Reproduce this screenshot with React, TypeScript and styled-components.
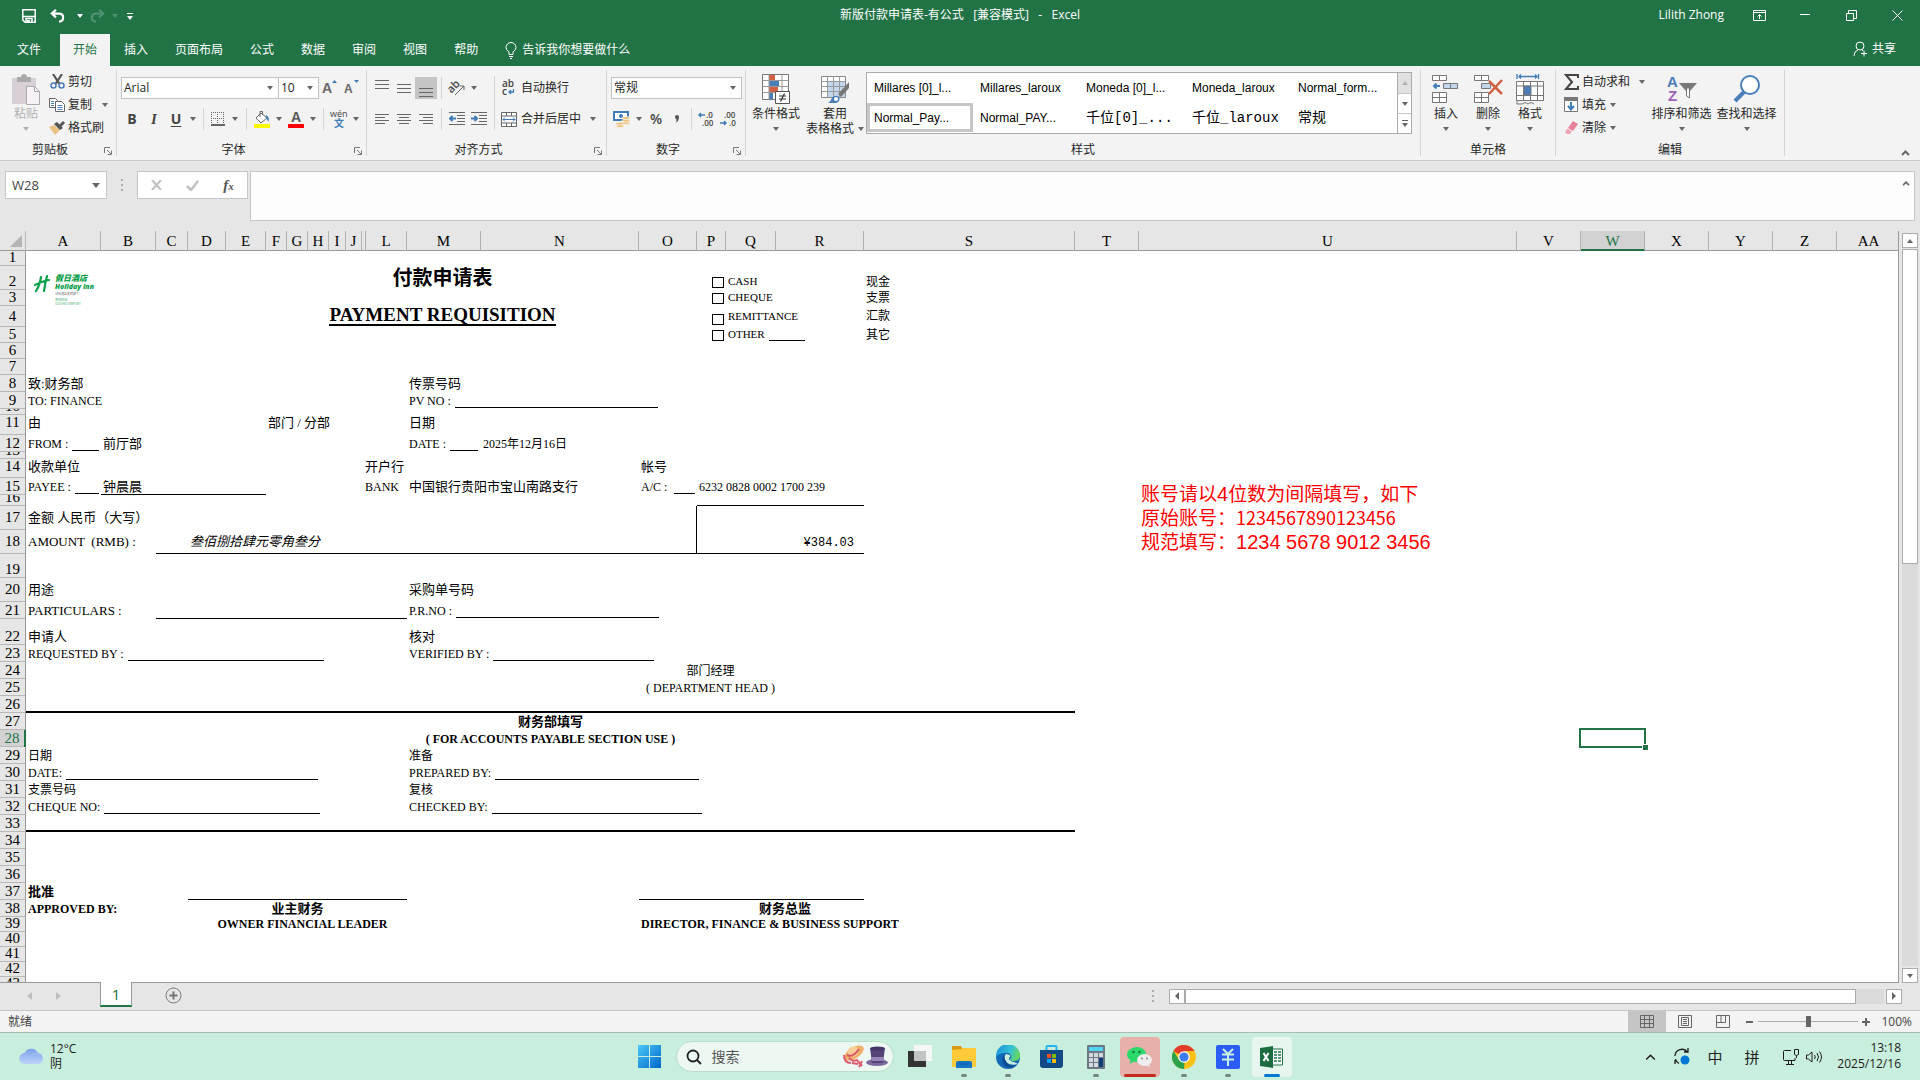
import React from "react";
import styled, { createGlobalStyle, css } from "styled-components";

const UI = `"Open Sans", "Noto Sans CJK SC", sans-serif`;
const SERIF = `"Liberation Serif", "Noto Sans CJK SC", serif`;
const GREEN = "#217346";

const Global = createGlobalStyle`
  *, *::before, *::after { box-sizing: border-box; }
  body { margin: 0; font: 12px/16px ${UI}; color: #262626; background: #e6e6e6; }
  button, input, select, textarea { font: inherit; color: inherit; margin: 0; }
  button { padding: 0; border: 0; background: none; }
  svg { display: block; flex: none; }
`;

const Page = styled.div`
  display: flex; flex-direction: column; height: 100vh; overflow: hidden;
`;

/* ---------- title bar and tabs ---------- */
const TitleBar = styled.header`
  display: grid; grid-template-columns: 1fr auto 1fr; align-items: center;
  flex: none; height: 34px; padding-bottom: 4px; background: ${GREEN}; color: #fff;
`;
const QuickBar = styled.div`
  display: flex; align-items: center; padding-left: 20px; padding-top: 2px;
`;
const DocName = styled.h1`
  margin: 0; font: inherit; white-space: pre;
`;
const WindowBar = styled.div`
  display: flex; justify-content: flex-end; align-items: center;
`;
const UserName = styled.span`margin-right: 12px;`;
const BarButton = styled.button<{ $w: number }>`
  display: flex; justify-content: center; align-items: center; width: ${p => p.$w}px; height: 28px; color: #fff;
`;
const Tabs = styled.nav`
  display: flex; gap: 1px; flex: none; height: 32px; background: ${GREEN}; color: #fff; padding-left: 3px;
`;
const Tab = styled.button<{ $on?: boolean }>`
  padding: 0 13px 1px; background: ${p => (p.$on ? "#f3f3f3" : "none")}; color: ${p => (p.$on ? GREEN : "#fff")};
  white-space: nowrap;
  &:first-child { padding-right: 18px; padding-left: 14px; }
`;
const Tell = styled.button`
  display: flex; align-items: center; gap: 5px; margin-left: 13px; color: #fff;
`;
const Share = styled(Tell)`margin-left: auto; margin-right: 24px; padding-bottom: 3px; gap: 4px;`;

/* ---------- ribbon ---------- */
const Ribbon = styled.section`
  display: flex; flex: none; height: 95px; background: #f3f3f3; border-bottom: 1px solid #c8c8c8;
`;
const GroupBox = styled.div<{ $w: number }>`
  display: flex; flex-direction: column; flex: none; width: ${p => p.$w}px; margin: 4px 0;
  border-right: 1px solid #d4d4d4;
`;
const GroupBody = styled.div<{ $pad: number }>`
  display: flex; height: 72px; padding-left: ${p => p.$pad}px;
`;
const GroupFoot = styled.div`
  display: flex; align-items: center; text-align: center; height: 14px; line-height: 14px;
`;
const GroupName = styled.span`flex: 1; padding-top: 1px;`;
const LaunchBtn = styled.button`
  display: flex; justify-content: center; width: 16px; padding-top: 4px;
`;
const Stack = styled.div`display: flex; flex-direction: column;`;
const Rows = styled.div`
  display: flex; flex-direction: column; gap: 9px; padding-top: 7px;
`;
const Row = styled.div`display: flex; align-items: center; height: 22px;`;
const ToolBtn = styled.button<{ $w?: number; $on?: boolean }>`
  display: flex; justify-content: center; align-items: center; flex: none;
  width: ${p => p.$w ?? 22}px; height: 22px; background: ${p => (p.$on ? "#c5c5c5" : "none")}; color: #444;
`;
const Letter = styled.span<{ $kind: "b" | "i" | "u" | "p" }>`
  font-size: 14px;
  ${p => p.$kind === "b" && css`font-weight: 700;`}
  ${p => p.$kind === "p" && css`font-weight: 600;`}
  ${p => p.$kind === "i" && css`font-family: "Liberation Serif", serif; font-style: italic; font-weight: 700; font-size: 15px;`}
  ${p => p.$kind === "u" && css`font-weight: 700; text-decoration: underline; text-underline-offset: 2px;`}
`;
const VSep = styled.span<{ $h?: number }>`
  flex: none; width: 1px; height: ${p => p.$h ?? 22}px; margin: 0 4px; background: #d4d4d4;
`;
const LongSep = styled(VSep)`margin-top: 6px;`;
const LineBtn = styled.button<{ $pad?: number }>`
  display: flex; align-items: center; gap: 2px; height: ${p => p.$pad ?? 23}px; white-space: nowrap;
`;
const IconBox = styled.span<{ $w?: number }>`
  display: flex; justify-content: center; flex: none; width: ${p => p.$w ?? 18}px;
`;
const CaretGap = styled.span<{ $l: number }>`margin-left: ${p => p.$l}px;`;
const BigBtn = styled.button<{ $w: number; $dim?: boolean }>`
  display: flex; flex-direction: column; align-items: center; flex: none; width: ${p => p.$w}px; height: 72px;
  padding-top: 3px; white-space: nowrap; color: ${p => (p.$dim ? "#b1b1b1" : "inherit")};
  line-height: 14px;
`;
const BigIcon = styled.span`display: flex; align-items: center; height: 32px; margin-bottom: 1px;`;
const BigLine = styled.span`display: flex; align-items: center; gap: 4px; min-height: 15px;`;
const Picker = styled.div<{ $w: number }>`
  display: grid; align-items: center; width: ${p => p.$w}px; height: 22px; border: 1px solid #c0c0c0; background: #fff;
  & + & { border-left: 0; }
  > * { grid-area: 1 / 1; }
  > svg { justify-self: end; margin-right: 5px; pointer-events: none; }
`;
const PickerSelect = styled.select`
  appearance: none; width: 100%; height: 20px; line-height: 20px; padding: 0 2px; border: 0; background: none; outline: 0;
`;
const Gallery = styled.div`
  display: grid; grid-template-columns: repeat(5, 106px) 14px; grid-template-rows: 30px 30px;
  margin: 2px 0 0 2px; border: 1px solid #ababab; background: #fff; height: 62px;
`;
const StyleItem = styled.button<{ $on?: boolean; $song?: boolean }>`
  height: 29px; padding-left: ${p => (p.$on ? 4 : 7)}px; text-align: left; white-space: nowrap; overflow: hidden;
  border: ${p => (p.$on ? "3px solid #c6c6c6" : "0")}; color: #000;
  font: ${p => (p.$song ? `14px/20px "Liberation Mono", "Noto Sans CJK SC", monospace` : `12px/20px "Liberation Sans", "Noto Sans CJK SC", sans-serif`)};
`;
const GalleryBar = styled.div`
  grid-area: 1 / 6 / 3 / 7; display: grid; grid-template-rows: 1fr 1fr 1fr; border-left: 1px solid #ababab;
`;
const GalleryBtn = styled.button<{ $off?: boolean }>`
  display: flex; justify-content: center; align-items: center; background: ${p => (p.$off ? "#e1e1e1" : "#fff")};
  & + & { border-top: 1px solid #c6c6c6; }
`;
const Collapse = styled.button`
  align-self: flex-end; margin: 0 10px 4px auto; display: flex;
`;

/* ---------- formula bar ---------- */
const FormulaRow = styled.section`
  display: flex; flex: none; align-items: flex-start; padding: 10px 5px 10px; height: 70px;
`;
const NameBox = styled.div`
  display: flex; align-items: center; width: 102px; height: 28px; padding-right: 6px; border: 1px solid #c6c6c6; background: #fff;
`;
const NameInput = styled.input`
  flex: 1; min-width: 0; border: 0; padding: 0 6px; background: none; outline: 0; font-size: 13px; color: #444;
`;
const Dots = styled.span`width: 30px; display: flex; justify-content: center; padding-top: 8px;`;
const FxBox = styled.div`
  display: flex; align-items: center; width: 111px; height: 28px; border: 1px solid #c6c6c6; background: #fff;
`;
const Fx = styled.span`
  font: italic 700 15px "Liberation Serif", serif; color: #555;
  small { font-size: 11px; }
`;
const FormulaBox = styled.div`
  display: flex; align-items: flex-start; flex: 1; height: 50px; margin-left: 2px; border: 1px solid #c6c6c6; background: #fdfdfd;
`;
const FormulaInput = styled.textarea`
  flex: 1; height: 48px; border: 0; background: none; resize: none; outline: 0;
`;
const FormulaToggle = styled.button`margin: 9px 4px;`;

/* ---------- sheet ---------- */
const SheetArea = styled.main`display: flex; flex: 1; min-height: 0;`;
const SheetView = styled.div`
  flex: 1; min-width: 0; overflow: hidden; border-right: 1px solid #999; border-bottom: 1px solid #999; background: #fff;
`;
const Table = styled.table`
  table-layout: fixed; width: 1901px; border-collapse: separate; border-spacing: 0; font: 12px/14px ${SERIF}; color: #000;
  td, th { padding: 0; font-weight: inherit; vertical-align: top; }
`;
const Corner = styled.th`background: #e6e6e6; border-right: 1px solid #b8b8b8; border-bottom: 1px solid #999;`;
const CornerMark = styled.svg`margin: 4px 3px 0 auto;`;
const ColHead = styled.th<{ $on?: boolean }>`
  height: 20px; background: ${p => (p.$on ? "#d2d2d2" : "#e6e6e6")}; color: ${p => (p.$on ? GREEN : "#000")};
  border-right: 1px solid #b1b1b1; border-bottom: ${p => (p.$on ? `2px solid ${GREEN}` : "1px solid #999")};
  overflow: hidden;
`;
const ColName = styled.div`height: 18px; padding-top: 1px; font-size: 15px; line-height: 18px;`;
const RowHead = styled.th<{ $on?: boolean }>`
  background: ${p => (p.$on ? "#d2d2d2" : "#e6e6e6")}; color: ${p => (p.$on ? GREEN : "#000")};
  border-right: ${p => (p.$on ? `2px solid ${GREEN}` : "1px solid #999")};
`;
type Level = "top" | "mid" | "low";
const level = (v?: Level) => (v === "mid" ? "center" : v === "top" ? "flex-start" : "flex-end");
const RowLabel = styled.div<{ $h: number; $v?: Level }>`
  display: flex; justify-content: center; align-items: ${p => level(p.$v)};
  height: ${p => p.$h}px; border-bottom: 1px solid #b8b8b8; overflow: hidden; font-size: 15px; line-height: 15px;
`;
type Align = "left" | "center" | "right";
const CellBox = styled.div<{
  $h: number; $v?: Level; $align?: Align; $bottom?: number; $right?: boolean; $size?: number; $bold?: boolean; $indent?: number;
}>`
  display: flex; gap: 4px; height: ${p => p.$h}px; padding: 0 2px;
  padding-left: ${p => 2 + (p.$indent ?? 0)}px; padding-bottom: ${p => ((p.$size ?? 12) !== 12 && !p.$bottom ? 1 : 0)}px;
  align-items: ${p => level(p.$v)};
  justify-content: ${p => (p.$align === "center" ? "center" : p.$align === "right" ? "flex-end" : "flex-start")};
  border-bottom: ${p => (p.$bottom ? `${p.$bottom}px solid #000` : "0")};
  border-right: ${p => (p.$right ? "1px solid #000" : "0")};
  font-size: ${p => p.$size ?? 12}px; font-weight: ${p => (p.$bold ? 700 : 400)};
  line-height: ${p => ((p.$size ?? 12) > 15 ? 22 : 15)}px; white-space: pre;
`;
const Blank = styled.span<{ $w: number }>`
  flex: none; width: ${p => p.$w}px; height: 1px; margin-bottom: 1px; background: #000; align-self: flex-end;
`;
const Heading = styled.span`border-bottom: 2px solid #000; line-height: 18px;`;
const Slant = styled.em`font-style: italic;`;
const Money = styled.span`font: 12px/15px "Liberation Mono", monospace; padding-top: 4px; margin-right: 8px;`;
const Tick = styled.input`
  appearance: none; flex: none; width: 12px; height: 11px; margin: 0 0 2px; border: 1px solid #000; background: #fff;
`;
const Note = styled.p`
  margin: 0; padding: 3px 0 0 2px; color: #f00; white-space: nowrap;
  font: 19px/24px "Noto Sans CJK SC", sans-serif;
`;
const NoteDigits = styled.span<{ $wide?: boolean }>`
  font: ${p => (p.$wide ? `20px/20px "Liberation Sans", sans-serif` : `18px/20px "Noto Sans CJK SC", sans-serif`)};
`;
const Active = styled.div`
  position: relative; height: 17px;
  &::before { content: ""; position: absolute; inset: -2px -1px -1px -2px; border: 2px solid ${GREEN}; }
  &::after {
    content: ""; position: absolute; right: -3px; bottom: -3px; width: 6px; height: 6px;
    background: ${GREEN}; border: 1px solid #fff; border-width: 1px 0 0 1px;
  }
`;
const VScroll = styled.div`
  display: flex; flex-direction: column; flex: none; width: 21px; padding: 2px 2px 0 3px;
`;
const ScrollBtn = styled.button`
  display: flex; justify-content: center; align-items: center; flex: none; width: 16px; height: 15px;
  border: 1px solid #ababab; background: #fff;
`;
const VTrack = styled.div`flex: 1; background: #dbdbdb; margin: 1px 0 2px;`;
const VThumb = styled.div`height: 44%; border: 1px solid #ababab; background: #fff;`;

/* ---------- sheet tabs and status bar ---------- */
const TabStrip = styled.div`
  display: flex; flex: none; height: 28px; border-bottom: 1px solid #c6c6c6; padding-right: 18px;
`;
const Arrows = styled.div`display: flex; align-items: center; gap: 24px; width: 100px; padding: 0 0 2px 27px;`;
const SheetTab = styled.button`
  width: 32px; height: 25px; margin-top: -1px; background: #fff; border: 1px solid #999; border-width: 0 1px 2px;
  border-bottom-color: ${GREEN}; color: ${GREEN}; font-size: 15px; line-height: 20px;
`;
const AddSheet = styled.button`margin: 4px 0 0 33px; align-self: flex-start;`;
const HScroll = styled.div`display: flex; align-items: center; gap: 15px; width: 750px; margin-left: auto; padding-bottom: 1px;`;
const HBar = styled.div`display: flex; flex: 1;`;
const HTrack = styled.div`flex: 1; background: #dbdbdb; margin-right: 2px;`;
const HThumb = styled.div`width: 96%; height: 15px; border: 1px solid #ababab; background: #fff;`;
const StatusBar = styled.footer`
  display: flex; flex: none; align-items: center; height: 22px; padding: 0 8px; background: #f3f3f3; border-bottom: 1px solid #a5bdb2; color: #444;
`;
const ViewBtns = styled.div`display: flex; margin-left: auto;`;
const ViewBtn = styled.button<{ $on?: boolean }>`
  display: flex; justify-content: center; align-items: center; width: 38px; height: 21px; background: ${p => (p.$on ? "#c5c5c5" : "none")};
`;
const Zoom = styled.div`display: flex; align-items: center; gap: 4px; margin-left: 4px;`;
const Sign = styled.button`width: 8px; color: #666;`;
const Slider = styled.input`
  appearance: none; width: 100px; height: 11px; background: linear-gradient(#ababab, #ababab) center / 100% 1px no-repeat; outline: 0;
  &::-webkit-slider-thumb { appearance: none; width: 5px; height: 11px; background: #666; border: 0; border-radius: 0; }
`;
const Percent = styled.span`width: 35px; text-align: right; margin-left: 7px;`;

/* ---------- task bar ---------- */
const TaskBar = styled.footer`
  display: grid; grid-template-columns: 1fr auto 1fr; align-items: center; flex: none; height: 47px; background: #c8eedd; color: #1c1c1c;
`;
const Weather = styled.button`
  display: flex; align-items: center; gap: 6px; padding-left: 19px; padding-bottom: 2px; justify-self: start; text-align: left;
`;
const WeatherText = styled.span`display: flex; flex-direction: column; line-height: 15px;`;
const Dock = styled.div`display: flex; align-items: center; padding-left: 1px;`;
const DockBtn = styled.button<{ $tone?: "alert" | "active"; $mark?: "dot" | "wide" | "long" }>`
  display: flex; justify-content: center; align-items: center; position: relative; width: 40px; height: 40px; margin: 0 2px; border-radius: 4px;
  background: ${p => (p.$tone === "alert" ? "#e8b0aa" : p.$tone === "active" ? "#e6f6ee" : "none")};
  &::after {
    content: ""; position: absolute; bottom: 0; border-radius: 2px; height: 3px;
    width: ${p => (p.$mark === "dot" ? 6 : p.$mark === "wide" ? 16 : p.$mark === "long" ? 32 : 0)}px;
    background: ${p => (p.$mark === "dot" ? "#728a7f" : p.$mark === "wide" ? "#0078d4" : "#c42b1c")};
  }
`;
const SearchBox = styled.label`
  display: flex; align-items: center; width: 218px; height: 31px; margin: 0 4px; padding: 0 4px 0 9px;
  border: 1px solid #b9dccb; border-radius: 16px; background: #eef8f3;
`;
const SearchInput = styled.input`
  flex: 1; min-width: 0; border: 0; background: none; padding: 0 10px; font-size: 14px; outline: 0;
  &::placeholder { color: #555; opacity: 1; }
`;
const Tray = styled.div`display: flex; justify-content: flex-end; align-items: center; padding-right: 19px;`;
const TrayBtn = styled.button<{ $w: number }>`
  display: flex; justify-content: center; align-items: center; width: ${p => p.$w}px; height: 30px; font-size: 15px;
`;
const Clock = styled.time`display: flex; flex-direction: column; text-align: right; width: 81px; line-height: 16px; padding-bottom: 2px;`;

/* ---------- small drawings ---------- */
const Caret = ({ c = "#666", up = false }: { c?: string; up?: boolean }) => (
  <svg width="6" height="4" viewBox="0 0 6 4"><path d={up ? "M0 4h6L3 0z" : "M0 0h6L3 4z"} fill={c} /></svg>
);
const Chevron = ({ c = "#666", w = 2, s = 9 }: { c?: string; w?: number; s?: number }) => (
  <svg width={s} height={s - 3} viewBox="0 0 9 6" fill="none" stroke={c} strokeWidth={w}><path d="M1 5l3.500-3.500L8 5" /></svg>
);
const Lines = ({ w, top }: { w: number[][]; top: number }) => (
  <svg width="16" height="18" viewBox="0 0 16 18" stroke="#666" strokeWidth="1">
    {w.map(([a, b], i) => <path key={i} d={`M${a} ${top + i * (w.length > 3 ? 3 : 4) + 0.5}H${b}`} />)}
  </svg>
);
const full = [[1, 15], [1, 15], [1, 15]];
const Indent = ({ right = false }: { right?: boolean }) => (
  <svg width="16" height="14" viewBox="0 0 16 14" fill="none" stroke="#666">
    <path d="M0 .5h16M8 3.500h8M8 6.500h8M8 9.500h8M0 12.500h16" />
    <path d={right ? "M0 6.500h6M3.500 4l2.500 2.500L3.500 9" : "M7 6.500H1M3.500 4L1 6.500 3.500 9"} stroke="#3f7cb8" strokeWidth="2" />
  </svg>
);
const Launcher = () => (
  <svg width="8" height="8" viewBox="0 0 8 8" fill="none" stroke="#777"><path d="M.5 6V.5H6M3 3l4 4M7.500 3.500v4h-4" /></svg>
);
const Save = () => (
  <svg width="14" height="14" viewBox="0 0 14 14" fill="none" stroke="#fff" strokeWidth="1.500"><path d="M.8.8h12.400v12.400H3L.8 11z" /><path d="M.8 7.500h12.400" /><path d="M4 13v-3.500h6V13" /><path d="M5 11h3v3H5z" fill="#fff" stroke="none" /></svg>
);
const Undo = ({ flip = false, c = "#fff" }: { flip?: boolean; c?: string }) => (
  <svg width="15" height="14" viewBox="0 0 15 14" fill="none" stroke={c} strokeWidth="2.200">
    <g transform={flip ? "matrix(-1 0 0 1 15 0)" : undefined}><path d="M6 .8L1.800 4.600 6 8.400M2 4.600h7c5.500 0 5.500 7.500 0 8" /></g>
  </svg>
);
const PasteIcon = () => (
  <svg width="28" height="31" viewBox="0 0 28 31"><path d="M0 4h24v26H0z" fill="#d8d0d6" /><path d="M5 3h4a3 3 0 016 0h4v5H5z" fill="#aaa" /><path d="M14.500 12.500h8l5 5v13h-13z" fill="#f7f2f8" stroke="#aaa" /><path d="M22.500 12.500v5h5" fill="none" stroke="#aaa" /></svg>
);
const Cut = () => (
  <svg width="15" height="15" viewBox="0 0 15 15" fill="none"><path d="M3 0l6.500 10M12 0L5.500 10" stroke="#555" strokeWidth="2.200" /><circle cx="3.500" cy="11.500" r="2.500" stroke="#4a7ebb" strokeWidth="1.500" /><circle cx="11.500" cy="11.500" r="2.500" stroke="#4a7ebb" strokeWidth="1.500" /></svg>
);
const Copy = () => (
  <svg width="16" height="14" viewBox="0 0 16 14" fill="#fff" stroke="#666"><path d="M.5.5h6l2 2v7h-8z" /><path d="M6.500 3.500h6l3 3v7h-9z" /><path d="M2 3.500h3M2 5.500h3M2 7.500h3M8.500 7.500h5M8.500 9.500h5M8.500 11.500h5" stroke="#4a7ebb" /></svg>
);
const Brush = () => (
  <svg width="16" height="14" viewBox="0 0 16 14"><path d="M0 6l5-2 6 5-5 5z" fill="#eac282" /><path d="M5 3l3-2 6 6-3 2z" fill="#555" /><path d="M10 4l4-4 2 2-4 4z" fill="#555" /></svg>
);
const GrowA = ({ down = false }: { down?: boolean }) => (
  <svg width="16" height="18" viewBox="0 0 16 18"><text x="0" y={down ? 14 : 14} fontFamily="Liberation Sans" fontWeight="700" fontSize={down ? 12 : 14} fill="#666">A</text><path d={down ? "M10 1h5l-2.500 3z" : "M10 4h5l-2.500-3z"} fill="#3f7cb8" /></svg>
);
const Borders = () => (
  <svg width="14" height="14" viewBox="0 0 14 14" fill="none" stroke="#666"><path d="M0 .5h13M0 6.500h13M.5 0v13M6.500 0v13M12.500 0v13" strokeDasharray="1 1" /><path d="M0 13h14" strokeWidth="2" /></svg>
);
const Fill = () => (
  <svg width="16" height="18" viewBox="0 0 16 18"><path d="M7 3l6 5-6 5-5-5z" fill="#fff" stroke="#666" /><path d="M6 7V1.500h2.500V5" fill="none" stroke="#666" /><path d="M12 5q4 2 2.500 7Q13 9 12 8z" fill="#3f7cb8" /><path d="M0 14h16v4H0z" fill="#ff0" /></svg>
);
const FontColor = () => (
  <svg width="16" height="18" viewBox="0 0 16 18"><text x="3" y="12" fontFamily="Liberation Sans" fontWeight="700" fontSize="14" fill="#555">A</text><path d="M0 14h16v4H0z" fill="#f00" /></svg>
);
const Wen = () => (
  <svg width="18" height="20" viewBox="0 0 18 20"><text x="0" y="8" fontFamily="Open Sans" fontSize="9" fill="#444">wén</text><text x="4" y="18" fontFamily="Noto Sans CJK SC" fontWeight="700" fontSize="10" fill="#3f7cb8">文</text></svg>
);
const Orient = () => (
  <svg width="18" height="18" viewBox="0 0 18 18"><text transform="rotate(-45 6 12)" x="2" y="12" fontFamily="Open Sans" fontSize="11" fontWeight="600" fill="#444">ab</text><path d="M7 16l9-9M16 11V7h-4" fill="none" stroke="#666" /></svg>
);
const Wrap = () => (
  <svg width="14" height="18" viewBox="0 0 14 18"><text x="0" y="8" fontFamily="Open Sans" fontWeight="600" fontSize="10" fill="#444">ab</text><text x="0" y="16" fontFamily="Open Sans" fontWeight="600" fontSize="10" fill="#444">c</text><path d="M11.500 10v3H7M9 11l-2 2 2 2" fill="none" stroke="#3f7cb8" strokeWidth="1.300" /></svg>
);
const Merge = () => (
  <svg width="16" height="15" viewBox="0 0 16 15" fill="#fff" stroke="#666"><path d="M.5.500h15v14H.5zM.5 4h15M.5 11h15M5.500.500V4M10.500.500V4M5.500 11v3.500M10.500 11v3.500" /><path d="M2 7.500h12M4 5.500l-2 2 2 2M12 5.500l2 2-2 2" fill="none" stroke="#3f7cb8" /></svg>
);
const Currency = () => (
  <svg width="18" height="18" viewBox="0 0 18 18"><path d="M1 2h14v8H1z" fill="#fff" stroke="#3f7cb8" strokeWidth="2" /><circle cx="8" cy="6" r="2" fill="#3f7cb8" /><g fill="#eac282" stroke="#fff" strokeWidth=".6"><ellipse cx="13" cy="13" rx="4" ry="1.500" /><ellipse cx="13" cy="10.500" rx="4" ry="1.500" /><ellipse cx="13" cy="8" rx="4" ry="1.500" /><ellipse cx="7" cy="16" rx="4" ry="1.500" /><ellipse cx="7" cy="13.500" rx="4" ry="1.500" /></g></svg>
);
const Decimal = ({ less = false }: { less?: boolean }) => (
  <svg width="18" height="16" viewBox="0 0 18 16" fontFamily="Open Sans" fontSize="8" fontWeight="600" fill="#444"><text x={less ? 4 : 8} y="7">{less ? ".00" : ".0"}</text><text x={less ? 9 : 4} y="15">{less ? ".0" : ".00"}</text><path d={less ? "M0 12h6M4 10l2 2-2 2" : "M7 4H1M3 2L1 4l2 2"} fill="none" stroke="#3f7cb8" strokeWidth="1.500" /></svg>
);
const CondIcon = () => (
  <svg width="28" height="30" viewBox="0 0 28 30"><path d="M.5.500h26v25H.5z" fill="#fff" stroke="#777" /><path d="M7 1h6v5H7zM7 13h9v5H7z" fill="#d35f43" /><path d="M7 7h10v5H7zM7 19h4v6H7z" fill="#4a7ebb" /><path d="M.5 6.500h26M.5 12.500h26M.5 18.500h26M7 .5v25M20 .5v25" stroke="#999" fill="none" /><path d="M13.500 17.500h14v12h-14z" fill="#fff" stroke="#555" /><path d="M17 22h7M17 25h7M22.500 19.500l-4 8" stroke="#333" strokeWidth="1.200" /></svg>
);
const TableIcon = () => (
  <svg width="29" height="30" viewBox="0 0 29 30"><path d="M.5 2.500h24v21H.5z" fill="#fff" stroke="#888" /><path d="M7 8h17v15H7z" fill="#c3d6ec" /><path d="M.5 7.500h24M.5 12.500h24M.5 17.500h24M6.500 2.500v21M12.500 2.500v21M18.500 2.500v21" stroke="#999" fill="none" /><path d="M28 8v6l-8 9-3-3z" fill="#777" /><path d="M7 29q3-2 4-5 3-4 7-1 2 4-3 6z" fill="#4a7ebb" /><circle cx="15" cy="25" r="2" fill="#fff" /></svg>
);
const CellIcon = ({ del = false }: { del?: boolean }) => (
  <svg width="29" height="28" viewBox="0 0 29 28" fill="#fff" stroke="#777"><path d="M.5.500h14v5H.5zM7.500.500v5M.5 17.500h14v10H.5zM7.500 17.500v10M.5 22.500h14" /><path d={del ? "M7.500 8.500h9v5h-9z" : "M11.500 8.500h14v5h-14zM18.500 8.500v5"} fill="#c3d6ec" />{del ? <path d="M15 6l13 13M28 5L15 19" stroke="#d35f43" strokeWidth="2.500" /> : <path d="M8 11H2M4.500 8.500L2 11l2.500 2.500" fill="none" stroke="#3f7cb8" strokeWidth="2" />}</svg>
);
const FormatIcon = () => (
  <svg width="28" height="31" viewBox="0 0 28 31" fill="none" stroke="#777"><path d="M1 0v5M22.500 0v5M3 2.500h18M5 .5l-2 2 2 2M19 .5l2 2-2 2" stroke="#3f7cb8" strokeWidth="1.300" /><path d="M.5 7.500h27v19H.5zM.5 12h27M.5 21.500h27M7.500 7.500v19M14.500 7.500v19M21.500 7.500v19" fill="#fff" /><path d="M8 12h7v9H8z" fill="#4a7ebb" /><path d="M1 27v3h5q3-3 6 0 3-3 6 0" /></svg>
);
const Sigma = () => (
  <svg width="15" height="16" viewBox="0 0 15 16" fill="none" stroke="#444" strokeWidth="2"><path d="M14 4V1H2l6 7-6 7h12v-3" /></svg>
);
const FillDown = () => (
  <svg width="14" height="15" viewBox="0 0 14 15"><path d="M.5.500h13v14H.5z" fill="#fff" stroke="#777" /><path d="M0 0h14v4H0z" fill="#777" /><path d="M7 5v7M4 9l3 3.500L10 9" fill="none" stroke="#3f7cb8" strokeWidth="2" /></svg>
);
const Eraser = () => (
  <svg width="13" height="13" viewBox="0 0 13 13"><path d="M8 0l5 3-5 7-5-3z" fill="#e8829a" /><path d="M2.500 7.500l4 3L5 13H2l-2-2z" fill="#f0a3b4" /></svg>
);
const SortIcon = () => (
  <svg width="30" height="30" viewBox="0 0 30 30"><text x="0" y="13" fontFamily="Liberation Sans" fontWeight="700" fontSize="15" fill="#4a7ebb">A</text><text x="1" y="27" fontFamily="Liberation Sans" fontWeight="700" fontSize="15" fill="#9b5fb5">Z</text><path d="M12 9h18l-7 8h-4z" fill="#777" /><path d="M19.500 14h3v10l-3-2z" fill="#fff" stroke="#777" /></svg>
);
const FindIcon = () => (
  <svg width="28" height="28" viewBox="0 0 28 28" fill="none" stroke="#4a7ebb"><circle cx="17" cy="10" r="9" fill="#fff" strokeWidth="2" /><path d="M11 17L2 26" strokeWidth="4" /></svg>
);
const Logo = () => (
  <svg width="64" height="44" viewBox="0 -9 64 44" role="img" aria-label="Holiday Inn">
    <g fill="none" stroke="#0ba14b" strokeWidth="2.200" strokeLinecap="round"><path d="M7 2Q6 10 2 16M13 1q-2 8-3 15M1 10q8-4 14-5" /></g>
    <g fill="#0ba14b"><text x="21" y="6" fontFamily="Noto Sans CJK SC" fontSize="8" fontWeight="900" fontStyle="italic">假日酒店</text><text x="21" y="14" fontFamily="Open Sans" fontSize="7" fontWeight="800" fontStyle="italic">Holiday Inn</text></g>
    <g fontFamily="Noto Sans CJK SC" fontSize="3"><text x="21" y="20" fill="#777">洲际酒店集团旗下</text><text x="21" y="26" fill="#3db36c">贵阳机场</text><text x="21" y="30" fill="#3db36c">GUIYANG AIRPORT</text></g>
  </svg>
);

/* ---------- sheet data ---------- */
const cols: [string, number][] = [
  ["A", 75], ["B", 55], ["C", 32], ["D", 38], ["E", 40], ["F", 21], ["G", 21], ["H", 21], ["I", 17], ["J", 16], ["", 4],
  ["L", 41], ["M", 74], ["N", 158], ["O", 58], ["P", 29], ["Q", 50], ["R", 88], ["S", 211], ["T", 64], ["U", 378],
  ["V", 64], ["W", 64], ["X", 64], ["Y", 64], ["Z", 64], ["AA", 64],
];
const heights = [
  15, 24, 16, 21, 16, 16, 16, 17, 17, 6, 20, 17, 7, 19, 17, 11, 24, 24, 24, 24, 17, 26,
  17, 17, 17, 17, 17, 17, 17, 17, 17, 17, 17, 17, 17, 17, 17, 17, 15, 15, 15, 15, 15,
];
const levels: Record<number, Level> = { 4: "mid", 11: "top", 14: "top", 17: "mid", 18: "mid", 20: "mid" };

type Cell = {
  from: number; to?: number; text?: React.ReactNode; align?: Align; bottom?: number; right?: boolean;
  size?: number; bold?: boolean; indent?: number; rows?: number; v?: Level;
};
/* column numbers: A=0 B=1 C=2 D=3 E=4 F=5 G=6 H=7 I=8 J=9 K=10 L=11 M=12 N=13 O=14 P=15 Q=16 R=17 S=18 T=19 U=20 V=21 W=22 */
const labelled = (label: string, width: number) => <>{label}<Blank $w={width} /></>;
const payWay = (id: string, label: string, zh: string, blank?: number): Cell[] => [
  { from: 15, align: "right", v: "low", text: <Tick type="checkbox" id={id} /> },
  { from: 16, to: 17, size: 11, text: <><label htmlFor={id}>{label}</label>{blank && <Blank $w={blank} />}</> },
  { from: 18, size: 12, text: zh },
];
const sheet: Record<number, Cell[]> = {
  2: [{ from: 0, v: "top", text: <Logo />, indent: 6 }, { from: 3, to: 14, align: "center", size: 20, bold: true, text: "付款申请表" }, ...payWay("cash", "CASH", "现金")],
  3: payWay("cheque", "CHEQUE", "支票"),
  4: [{ from: 3, to: 14, align: "center", size: 19, bold: true, text: <Heading>PAYMENT REQUISITION</Heading> }, ...payWay("remittance", "REMITTANCE", "汇款")],
  5: payWay("other", "OTHER", "其它", 36),
  8: [{ from: 0, size: 13, text: "致:财务部" }, { from: 12, size: 13, text: "传票号码" }],
  9: [{ from: 0, text: "TO: FINANCE" }, { from: 12, to: 14, text: labelled("PV NO :", 203) }],
  11: [{ from: 0, size: 13, text: "由" }, { from: 5, size: 13, text: "部门 / 分部" }, { from: 12, size: 13, text: "日期" }],
  12: [{ from: 0, text: labelled("FROM :", 27) }, { from: 1, size: 13, text: "前厅部" }, { from: 12, text: labelled("DATE :", 28) }, { from: 13, text: "2025年12月16日" }],
  14: [{ from: 0, size: 13, text: "收款单位" }, { from: 10, size: 13, indent: 1, text: "开户行" }, { from: 14, size: 13, text: "帐号" }],
  15: [
    { from: 0, text: labelled("PAYEE :", 24) }, { from: 1, to: 4, size: 13, bottom: 1, text: "钟晨晨" }, { from: 10, indent: 1, text: "BANK" },
    { from: 12, size: 13, text: "中国银行贵阳市宝山南路支行" }, { from: 14, text: labelled("A/C : ", 21) }, { from: 15, text: "6232 0828 0002 1700 239" },
    { from: 20, rows: 4, text: <Note>账号请以<NoteDigits $wide>4</NoteDigits>位数为间隔填写，如下<br />原始账号：<NoteDigits>1234567890123456</NoteDigits><br />规范填写：<NoteDigits $wide>1234 5678 9012 3456</NoteDigits></Note> },
  ],
  16: [{ from: 15, to: 17, bottom: 1 }],
  17: [{ from: 0, size: 13, text: "金额 人民币（大写）" }, { from: 14, right: true }],
  18: [
    { from: 0, size: 13, text: "AMOUNT  (RMB) :" }, { from: 2, bottom: 1 }, { from: 3, to: 13, size: 13, bottom: 1, text: <Slant>叁佰捌拾肆元零角叁分</Slant> },
    { from: 14, bottom: 1, right: true }, { from: 15, to: 17, bottom: 1, align: "right", text: <Money>¥384.03</Money> },
  ],
  20: [{ from: 0, size: 13, text: "用途" }, { from: 12, size: 13, text: "采购单号码" }],
  21: [{ from: 0, size: 13, text: "PARTICULARS :" }, { from: 2, to: 11, bottom: 1 }, { from: 12, to: 14, text: labelled("P.R.NO :", 203) }],
  22: [{ from: 0, size: 13, text: "申请人" }, { from: 12, size: 13, text: "核对" }],
  23: [{ from: 0, to: 8, text: labelled("REQUESTED BY :", 196) }, { from: 12, to: 14, text: labelled("VERIFIED BY :", 161) }],
  24: [{ from: 9, to: 18, align: "center", text: "部门经理" }],
  25: [{ from: 9, to: 18, align: "center", text: "( DEPARTMENT HEAD )" }],
  26: [{ from: 0, to: 18, bottom: 2 }],
  27: [{ from: 0, to: 18, align: "center", bold: true, size: 13, text: "财务部填写" }],
  28: [{ from: 0, to: 18, align: "center", bold: true, text: "( FOR ACCOUNTS PAYABLE SECTION USE )" }, { from: 22, text: <Active /> }],
  29: [{ from: 0, text: "日期" }, { from: 12, text: "准备" }],
  30: [{ from: 0, to: 8, text: labelled("DATE:", 252) }, { from: 12, to: 15, text: labelled("PREPARED BY:", 204) }],
  31: [{ from: 0, text: "支票号码" }, { from: 12, text: "复核" }],
  32: [{ from: 0, to: 8, text: labelled("CHEQUE NO:", 216) }, { from: 12, to: 15, text: labelled("CHECKED BY:", 210) }],
  33: [{ from: 0, to: 18, bottom: 2 }],
  37: [{ from: 0, bold: true, size: 13, text: "批准" }, { from: 3, to: 11, bottom: 1 }, { from: 14, to: 17, bottom: 1 }],
  38: [{ from: 0, bold: true, text: "APPROVED BY:" }, { from: 3, to: 11, align: "center", bold: true, size: 13, text: "业主财务" }, { from: 14, to: 17, indent: 118, bold: true, size: 13, text: "财务总监" }],
  39: [{ from: 3, to: 11, align: "center", indent: 10, bold: true, text: "OWNER FINANCIAL LEADER" }, { from: 14, bold: true, text: "DIRECTOR, FINANCE & BUSINESS SUPPORT" }],
};

function SheetRow({ n, h }: { n: number; h: number }) {
  const out: React.ReactNode[] = [];
  const limit = n > 15 && n < 19 ? 20 : cols.length;
  let at = 0;
  (sheet[n] ?? []).forEach(c => {
    if (c.from > at) out.push(<td key={`e${at}`} colSpan={c.from - at} />);
    const to = c.to ?? c.from;
    const bare = c.rows || (n === 28 && c.from === 22);
    out.push(
      <td key={c.from} colSpan={to - c.from + 1} rowSpan={c.rows}>
        {bare ? c.text : (
          <CellBox $h={h} $v={c.v ?? levels[n]} $align={c.align} $bottom={c.bottom} $right={c.right} $size={c.size} $bold={c.bold} $indent={c.indent}>{c.text}</CellBox>
        )}
      </td>
    );
    at = to + 1;
  });
  if (at < limit) out.push(<td key="rest" colSpan={limit - at} />);
  return (
    <tr>
      <RowHead scope="row" $on={n === 28}><RowLabel $h={h} $v={levels[n]}>{n}</RowLabel></RowHead>
      {out}
    </tr>
  );
}

const Group = ({ label, w, pad = 4, launch, children }: { label: string; w: number; pad?: number; launch?: boolean; children: React.ReactNode }) => (
  <GroupBox $w={w}>
    <GroupBody $pad={pad}>{children}</GroupBody>
    <GroupFoot><GroupName>{label}</GroupName>{launch && <LaunchBtn aria-label={label}><Launcher /></LaunchBtn>}</GroupFoot>
  </GroupBox>
);
const Big = ({ w, icon, label, dim }: { w: number; icon: React.ReactNode; label: string; dim?: boolean }) => (
  <BigBtn $w={w} $dim={dim}><BigIcon>{icon}</BigIcon><BigLine>{label}</BigLine><BigLine><Caret c={dim ? "#b1b1b1" : "#666"} /></BigLine></BigBtn>
);
const Drop = ({ w = 12 }: { w?: number }) => <ToolBtn $w={w} aria-label="更多"><Caret /></ToolBtn>;

const styleNames: [string, boolean?, boolean?][] = [
  ["Millares [0]_l..."], ["Millares_laroux"], ["Moneda [0]_l..."], ["Moneda_laroux"], ["Normal_form..."],
  ["Normal_Pay...", true], ["Normal_PAY..."], ["千位[0]_...", false, true], ["千位_laroux", false, true], ["常规", false, true],
];

export default function App() {
  return (
    <Page>
      <Global />
      <TitleBar>
        <QuickBar>
          <BarButton $w={17} aria-label="保存"><Save /></BarButton>
          <BarButton $w={40} aria-label="撤消"><Undo /></BarButton>
          <Caret c="#fff" />
          <BarButton $w={29} aria-label="恢复"><Undo flip c="#4f9070" /></BarButton>
          <Caret c="#4f9070" />
          <BarButton $w={24} aria-label="自定义"><svg width="6" height="7" viewBox="0 0 6 7" fill="#fff"><path d="M0 0h6v1H0zM0 3h6L3 7z" /></svg></BarButton>
        </QuickBar>
        <DocName>新版付款申请表-有公式   [兼容模式]   -   Excel</DocName>
        <WindowBar>
          <UserName>Lilith Zhong</UserName>
          <BarButton $w={46} aria-label="功能区"><svg width="13" height="11" viewBox="0 0 13 11" fill="none" stroke="#fff"><path d="M.5.500h12v10H.5zM.5 2.500h12M6.500 9V4.500M4.500 6.500l2-2 2 2" /></svg></BarButton>
          <BarButton $w={46} aria-label="最小化"><svg width="10" height="2"><path d="M0 0h10v1H0z" fill="#fff" /></svg></BarButton>
          <BarButton $w={46} aria-label="还原"><svg width="11" height="11" viewBox="0 0 11 11" fill="none" stroke="#fff"><path d="M.5 3.500h7v7h-7zM2.500 3.500v-3h8v8h-3" /></svg></BarButton>
          <BarButton $w={46} aria-label="关闭"><svg width="11" height="11" viewBox="0 0 11 11" stroke="#fff"><path d="M.5.500l10 10M10.500.500l-10 10" /></svg></BarButton>
        </WindowBar>
      </TitleBar>
      <Tabs>
        {["文件", "开始", "插入", "页面布局", "公式", "数据", "审阅", "视图", "帮助"].map(t => <Tab key={t} $on={t === "开始"}>{t}</Tab>)}
        <Tell>
          <svg width="12" height="17" viewBox="0 0 12 17" fill="none" stroke="#fff"><path d="M4 12.500V10Q1 8 1 5.500a5 5 0 0110 0Q11 8 8 10v2.500zM4 14.500h4M5 16.500h2" /></svg>
          告诉我你想要做什么
        </Tell>
        <Share>
          <svg width="15" height="16" viewBox="0 0 15 16" fill="none" stroke="#fff"><circle cx="7" cy="5" r="4" /><path d="M1 15q0-5 4-6M9 9l1 1M8 12.500h6M11 9.500v6" /></svg>
          共享
        </Share>
      </Tabs>

      <Ribbon>
        <Group label="剪贴板" w={117} launch>
          <Big w={44} dim icon={<PasteIcon />} label="粘贴" />
          <Stack>
            <LineBtn><IconBox><Cut /></IconBox>剪切</LineBtn>
            <LineBtn><IconBox><Copy /></IconBox>复制<CaretGap $l={8}><Caret /></CaretGap></LineBtn>
            <LineBtn><IconBox><Brush /></IconBox>格式刷</LineBtn>
          </Stack>
        </Group>
        <Group label="字体" w={250} launch>
          <Rows>
            <Row>
              <Picker $w={158}><PickerSelect aria-label="字体"><option>Arial</option></PickerSelect><Caret /></Picker>
              <Picker $w={40}><PickerSelect aria-label="字号"><option>10</option></PickerSelect><Caret /></Picker>
              <ToolBtn aria-label="增大字号"><GrowA /></ToolBtn><ToolBtn aria-label="减小字号"><GrowA down /></ToolBtn>
            </Row>
            <Row>
              <ToolBtn><Letter $kind="b">B</Letter></ToolBtn><ToolBtn><Letter $kind="i">I</Letter></ToolBtn><ToolBtn><Letter $kind="u">U</Letter></ToolBtn><Drop /><VSep />
              <ToolBtn $w={20} aria-label="边框"><Borders /></ToolBtn><Drop w={14} /><VSep />
              <ToolBtn aria-label="填充颜色"><Fill /></ToolBtn><Drop /><ToolBtn aria-label="字体颜色"><FontColor /></ToolBtn><Drop /><VSep />
              <ToolBtn aria-label="拼音"><Wen /></ToolBtn><Drop />
            </Row>
          </Rows>
        </Group>
        <Group label="对齐方式" w={240} launch>
          <Rows>
            <Row>
              <ToolBtn aria-label="顶端对齐"><Lines w={full} top={1} /></ToolBtn><ToolBtn aria-label="垂直居中"><Lines w={full} top={5} /></ToolBtn><ToolBtn $on aria-label="底端对齐"><Lines w={full} top={9} /></ToolBtn><VSep />
              <ToolBtn aria-label="方向"><Orient /></ToolBtn><Drop />
            </Row>
            <Row>
              <ToolBtn aria-label="左对齐"><Lines w={[[1, 15], [1, 11], [1, 15], [1, 11]]} top={4} /></ToolBtn><ToolBtn aria-label="居中"><Lines w={[[1, 15], [3, 13], [1, 15], [3, 13]]} top={4} /></ToolBtn><ToolBtn aria-label="右对齐"><Lines w={[[1, 15], [5, 15], [1, 15], [5, 15]]} top={4} /></ToolBtn><VSep />
              <ToolBtn aria-label="减少缩进"><Indent /></ToolBtn><ToolBtn aria-label="增加缩进"><Indent right /></ToolBtn>
            </Row>
          </Rows>
          <LongSep $h={54} />
          <Rows>
            <LineBtn $pad={22}><IconBox $w={20}><Wrap /></IconBox>自动换行</LineBtn>
            <LineBtn $pad={22}><IconBox $w={20}><Merge /></IconBox>合并后居中<CaretGap $l={7}><Caret /></CaretGap></LineBtn>
          </Rows>
        </Group>
        <Group label="数字" w={139} launch>
          <Rows>
            <Picker $w={131}><PickerSelect aria-label="数字格式"><option>常规</option></PickerSelect><Caret /></Picker>
            <Row>
              <ToolBtn aria-label="会计数字格式"><Currency /></ToolBtn><Drop /><ToolBtn><Letter $kind="p">%</Letter></ToolBtn>
              <ToolBtn $w={20} aria-label="千位分隔"><svg width="4" height="8" viewBox="0 0 5 9"><path d="M0 2a2.200 2.200 0 015 0q0 5-4 7 1-2 1-4-2-1-2-3z" fill="#555" /></svg></ToolBtn><VSep />
              <ToolBtn aria-label="增加小数位"><Decimal /></ToolBtn><ToolBtn aria-label="减少小数位"><Decimal less /></ToolBtn>
            </Row>
          </Rows>
        </Group>
        <Group label="样式" w={675} pad={0}>
          <Big w={60} icon={<CondIcon />} label="条件格式" />
          <BigBtn $w={58}><BigIcon><TableIcon /></BigIcon><BigLine>套用</BigLine><BigLine>表格格式<Caret /></BigLine></BigBtn>
          <Gallery>
            {styleNames.map(([t, on, song]) => <StyleItem key={t} $on={on} $song={song}>{t}</StyleItem>)}
            <GalleryBar>
              <GalleryBtn $off aria-label="上"><Caret up c="#b1b1b1" /></GalleryBtn><GalleryBtn aria-label="下"><Caret /></GalleryBtn>
              <GalleryBtn aria-label="其他"><svg width="6" height="7" viewBox="0 0 6 7" fill="#666"><path d="M0 0h6v1H0zM0 3h6L3 7z" /></svg></GalleryBtn>
            </GalleryBar>
          </Gallery>
        </Group>
        <Group label="单元格" w={135}>
          <Big w={42} icon={<CellIcon />} label="插入" /><Big w={42} icon={<CellIcon del />} label="删除" /><Big w={42} icon={<FormatIcon />} label="格式" />
        </Group>
        <Group label="编辑" w={229} pad={6}>
          <Stack>
            <LineBtn><IconBox><Sigma /></IconBox>自动求和<CaretGap $l={7}><Caret /></CaretGap></LineBtn>
            <LineBtn><IconBox><FillDown /></IconBox>填充<CaretGap $l={2}><Caret /></CaretGap></LineBtn>
            <LineBtn><IconBox><Eraser /></IconBox>清除<CaretGap $l={2}><Caret /></CaretGap></LineBtn>
          </Stack>
          <CaretGap $l={4} />
          <Big w={65} icon={<SortIcon />} label="排序和筛选" /><Big w={65} icon={<FindIcon />} label="查找和选择" />
        </Group>
        <Collapse aria-label="折叠功能区"><Chevron /></Collapse>
      </Ribbon>

      <FormulaRow>
        <NameBox><NameInput aria-label="名称框" defaultValue="W28" /><svg width="8" height="5" viewBox="0 0 8 5"><path d="M0 0h8L4 5z" fill="#666" /></svg></NameBox>
        <Dots><svg width="2" height="12" fill="#ababab"><path d="M0 0h2v2H0zM0 5h2v2H0zM0 10h2v2H0z" /></svg></Dots>
        <FxBox>
          <ToolBtn $w={36} aria-label="取消"><svg width="11" height="10" viewBox="0 0 11 10" stroke="#c0c0c0" strokeWidth="2"><path d="M1 0l9 10M10 0L1 10" /></svg></ToolBtn>
          <ToolBtn $w={37} aria-label="输入"><svg width="13" height="11" viewBox="0 0 13 11" fill="none" stroke="#c0c0c0" strokeWidth="2.500"><path d="M1 6l4 4 7-9" /></svg></ToolBtn>
          <ToolBtn $w={35} aria-label="插入函数"><Fx>f<small>x</small></Fx></ToolBtn>
        </FxBox>
        <FormulaBox><FormulaInput aria-label="编辑栏" /><FormulaToggle aria-label="折叠编辑栏"><Chevron s={8} /></FormulaToggle></FormulaBox>
      </FormulaRow>

      <SheetArea>
        <SheetView>
          <Table>
            <colgroup><col style={{ width: 26 }} />{cols.map(([, w], i) => <col key={i} style={{ width: w }} />)}</colgroup>
            <thead>
              <tr>
                <Corner><CornerMark width="12" height="12" viewBox="0 0 12 12"><path d="M12 0v12H0z" fill="#b4b4b4" /></CornerMark></Corner>
                {cols.map(([name], i) => <ColHead key={i} scope="col" $on={name === "W"}><ColName>{name}</ColName></ColHead>)}
              </tr>
            </thead>
            <tbody>{heights.map((h, i) => <SheetRow key={i} n={i + 1} h={h} />)}</tbody>
          </Table>
        </SheetView>
        <VScroll>
          <ScrollBtn aria-label="向上"><Caret up /></ScrollBtn>
          <VTrack><VThumb /></VTrack>
          <ScrollBtn aria-label="向下"><Caret /></ScrollBtn>
        </VScroll>
      </SheetArea>

      <TabStrip>
        <Arrows>
          <svg width="5" height="8"><path d="M5 0v8L0 4z" fill="#c0c0c0" /></svg>
          <svg width="5" height="8"><path d="M0 0v8l5-4z" fill="#c0c0c0" /></svg>
        </Arrows>
        <SheetTab>1</SheetTab>
        <AddSheet aria-label="新工作表"><svg width="17" height="17" viewBox="0 0 17 17" fill="none" stroke="#777"><circle cx="8.500" cy="8.500" r="7.500" /><path d="M8.500 4.500v8M4.500 8.500h8" strokeWidth="2" /></svg></AddSheet>
        <HScroll>
          <svg width="2" height="12" fill="#ababab"><path d="M0 0h2v2H0zM0 5h2v2H0zM0 10h2v2H0z" /></svg>
          <HBar>
            <ScrollBtn aria-label="向左"><svg width="4" height="8"><path d="M4 0v8L0 4z" fill="#666" /></svg></ScrollBtn>
            <HTrack><HThumb /></HTrack>
            <ScrollBtn aria-label="向右"><svg width="4" height="8"><path d="M0 0v8l4-4z" fill="#666" /></svg></ScrollBtn>
          </HBar>
        </HScroll>
      </TabStrip>
      <StatusBar>
        就绪
        <ViewBtns>
          <ViewBtn $on aria-label="普通"><svg width="14" height="13" viewBox="0 0 14 13" fill="none" stroke="#666"><path d="M.5.500h13v12H.5zM.5 4.500h13M.5 8.500h13M4.500.500v12M9.500.500v12" /></svg></ViewBtn>
          <ViewBtn aria-label="页面布局"><svg width="14" height="13" viewBox="0 0 14 13" fill="none" stroke="#666"><path d="M.5.500h13v12H.5zM3.500 2.500h7v8h-7zM5 4.500h4M5 6.500h4M5 8.500h4" /></svg></ViewBtn>
          <ViewBtn aria-label="分页预览"><svg width="14" height="13" viewBox="0 0 14 13" fill="none" stroke="#666"><path d="M.5.500h13v12H.5zM.5 7.500h9v-7M5 .5v7" /></svg></ViewBtn>
        </ViewBtns>
        <Zoom>
          <Sign aria-label="缩小"><svg width="7" height="2"><path d="M0 0h7v2H0z" fill="#666" /></svg></Sign>
          <Slider type="range" aria-label="缩放" defaultValue={50} />
          <Sign aria-label="放大"><svg width="8" height="8"><path d="M3 0h2v8H3zM0 3h8v2H0z" fill="#666" /></svg></Sign>
        </Zoom>
        <Percent>100%</Percent>
      </StatusBar>

      <TaskBar>
        <Weather>
          <svg width="25" height="18" viewBox="0 0 25 18"><defs><linearGradient id="cloud" x2="0" y2="1"><stop stopColor="#7ba0ea" /><stop offset="1" stopColor="#bcd2fa" /></linearGradient></defs><path d="M6 17a5.500 5.500 0 01-.5-11A7.500 7.500 0 0119 6a5.600 5.600 0 01.500 11z" fill="url(#cloud)" /><path d="M1 12q4-5 9-2 5-5 10-2" fill="none" stroke="#a5c2f7" /></svg>
          <WeatherText><span>12°C</span><span>阴</span></WeatherText>
        </Weather>
        <Dock>
          <DockBtn aria-label="开始"><svg width="23" height="23" viewBox="0 0 23 23"><defs><linearGradient id="win" x2="1" y2="1"><stop stopColor="#4cc8fa" /><stop offset="1" stopColor="#0067c8" /></linearGradient></defs><path d="M0 0h11v11H0zM12 0h11v11H12zM0 12h11v11H0zM12 12h11v11H12z" fill="url(#win)" /></svg></DockBtn>
          <SearchBox>
            <svg width="16" height="16" viewBox="0 0 16 16" fill="none" stroke="#222" strokeWidth="1.800"><circle cx="7" cy="7" r="5.500" /><path d="M11 11l4 4" /></svg>
            <SearchInput aria-label="搜索" placeholder="搜索" />
            <svg width="47" height="24" viewBox="0 0 47 24"><ellipse cx="12" cy="8" rx="11" ry="5.500" transform="rotate(-32 12 8)" fill="#eeb06a" /><ellipse cx="11" cy="6.500" rx="5.500" ry="5" transform="rotate(-20 11 6.500)" fill="#f9cf98" /><path d="M5 10q6 3 12-6" stroke="#dc5468" strokeWidth="2" fill="none" /><path d="M2 10q0 8 7 8M7 13l4 3 4-1 5 6M10 18l6 1M20 16l-3 6" stroke="#e05a6e" strokeWidth="2" fill="none" /><ellipse cx="35" cy="17.500" rx="11" ry="3.500" fill="#7a6a9c" /><path d="M28 3h15l-2 15H30z" fill="#55447a" /><path d="M29 12h13l-.5 4H30z" fill="#9585bb" /><ellipse cx="35.500" cy="3.500" rx="7.500" ry="2" fill="#44356a" /></svg>
          </SearchBox>
          <DockBtn aria-label="任务视图"><svg width="24" height="23" viewBox="0 0 24 23"><path d="M0 6h18v16H0z" fill="#333" /><path d="M6 0h18v16H6z" fill="#f5f7f6" /><path d="M6 6h12v10H6z" fill="#c2c4c3" /></svg></DockBtn>
          <DockBtn $mark="dot" aria-label="文件资源管理器"><svg width="24" height="22" viewBox="0 0 24 22"><path d="M0 1q0-1 1-1h8l2 4H0z" fill="#d99a12" /><path d="M0 4l10-1 1-1h12q1 0 1 1v18H0z" fill="#ffca3a" /><path d="M4 22v-5q0-2 2-2h12q2 0 2 2v5z" fill="#1674c4" /><path d="M7 18h10" stroke="#0b5799" /></svg></DockBtn>
          <DockBtn $mark="dot" aria-label="Edge"><svg width="24" height="24" viewBox="0 0 24 24"><defs><linearGradient id="edge" y1=".2" x2="1" y2=".5"><stop stopColor="#1b8fd6" /><stop offset=".6" stopColor="#35c3d8" /><stop offset="1" stopColor="#68d65a" /></linearGradient></defs><circle cx="12" cy="12" r="12" fill="#1468b8" /><path d="M0 12A12 12 0 0124 10q0 6-6 6-4 0-4-2 2-1 1-4-2-3-6-2-6 0-9 4z" fill="url(#edge)" /><path d="M10 9q-3 3 0 8 4 4 12 2-2-1-4-2-5-1-5-4 2-1 1-3z" fill="#c8eedd" /><path d="M8 10q-4 6 1 11 6 4 12-1-7 2-10-2-3-4-3-8z" fill="#0d4c93" /></svg></DockBtn>
          <DockBtn aria-label="应用商店"><svg width="23" height="23" viewBox="0 0 23 23"><path d="M6.500 6V2q0-1 1-1h8q1 0 1 1v4" fill="none" stroke="#29b3ee" strokeWidth="2" /><path d="M0 5h23v15q0 3-3 3H3q-3 0-3-3z" fill="#134a86" /><path d="M7 9h4v4H7z" fill="#f25022" /><path d="M12 9h4v4h-4z" fill="#7fba00" /><path d="M7 14h4v4H7z" fill="#00a4ef" /><path d="M12 14h4v4h-4z" fill="#ffb900" /></svg></DockBtn>
          <DockBtn $mark="dot" aria-label="计算器"><svg width="18" height="24" viewBox="0 0 18 24"><rect width="18" height="24" rx="1" fill="#6c7783" /><path d="M2 2h14v4H2z" fill="#4fd4f5" /><path d="M2 8h4v4H2zM7 8h4v4H7zM12 8h4v4h-4zM2 13h4v4H2zM7 13h4v4H7zM2 18h4v4H2zM7 18h4v4H7z" fill="#d3d9de" /><path d="M12 13h4v9h-4z" fill="#103f78" /></svg></DockBtn>
          <DockBtn $tone="alert" $mark="long" aria-label="微信"><svg width="26" height="20" viewBox="0 0 26 20"><path d="M10 0c6 0 9 4 9 7.500S16 15 10 15q-2 0-3-.5L3 17l.5-4Q0 11 0 7.500C0 4 4 0 10 0z" fill="#2bd96b" /><ellipse cx="17.500" cy="13" rx="7.500" ry="6" fill="#eee" /><path d="M22 17l1 3-4-2z" fill="#eee" /><g fill="#13703a"><circle cx="6.500" cy="5" r="1.200" /><circle cx="12.500" cy="5" r="1.200" /></g><g fill="#888"><circle cx="15" cy="11.500" r="1" /><circle cx="20" cy="11.500" r="1" /></g></svg></DockBtn>
          <DockBtn $mark="dot" aria-label="Chrome"><svg width="24" height="24" viewBox="0 0 24 24"><circle cx="12" cy="12" r="12" fill="#fbc116" /><path d="M12 12L1.600 6A12 12 0 0122.400 6H12z" fill="#e33b2e" /><path d="M1.600 6L7 15l5.500 3L12 24A12 12 0 011.600 6z" fill="#2ba24c" /><path d="M1.600 6A12 12 0 0112 0v7z" fill="#e33b2e" /><circle cx="12" cy="12" r="5.800" fill="#fff" /><circle cx="12" cy="12" r="4.600" fill="#3b7ded" /></svg></DockBtn>
          <DockBtn $mark="dot" aria-label="支付"><svg width="24" height="24" viewBox="0 0 24 24"><rect width="24" height="24" rx="2" fill="#2c5cf6" /><path d="M7 4l5 5 5-5M12 9v12M6 9.500h12M6 14.500h12" fill="none" stroke="#c8eedd" strokeWidth="2" /></svg></DockBtn>
          <DockBtn $tone="active" $mark="wide" aria-label="Excel"><svg width="23" height="22" viewBox="0 0 23 22"><path d="M11 3h11.500v16H11z" fill="#fff" stroke="#217346" /><path d="M14 6h3M18 6h3M14 9h3M18 9h3M14 12h3M18 12h3M14 15h3M18 15h3" stroke="#217346" strokeWidth="1.500" /><path d="M0 2l13-2v22L0 20z" fill="#1d6b40" /><path d="M3.500 7l5 8M8.500 7l-5 8" stroke="#fff" strokeWidth="2" /></svg></DockBtn>
        </Dock>
        <Tray>
          <TrayBtn $w={32} aria-label="显示隐藏的图标"><Chevron c="#1c1c1c" w={1.2} s={11} /></TrayBtn>
          <TrayBtn $w={32} aria-label="更新"><svg width="16" height="17" viewBox="0 0 16 17" fill="none" stroke="#1c1c1c" strokeWidth="1.300"><path d="M1 8a7 7 0 0112.500-4M14 0v4h-4M5 15.500Q2 14 1.500 11M1 16v-4" /><circle cx="11" cy="12" r="4.500" fill="#0078d4" stroke="none" /></svg></TrayBtn>
          <TrayBtn $w={34}>中</TrayBtn>
          <TrayBtn $w={40}>拼</TrayBtn>
          <TrayBtn $w={36} aria-label="网络"><svg width="17" height="16" viewBox="0 0 17 16" fill="none" stroke="#1c1c1c"><path d="M9 1.500H2.500q-1 0-1 1v8q0 1 1 1H13V9M4 15.500h8M6.500 12v3M9.500 12v3M12.500.5h4v5l-2 1-2-1zM14.500 6.500V9" /></svg></TrayBtn>
          <TrayBtn $w={12} aria-label="音量"><svg width="17" height="14" viewBox="0 0 17 14" fill="none" stroke="#1c1c1c"><path d="M.5 5h2L6 2v10L2.500 9h-2zM8.500 5q1.500 2 0 4M11 3q3 4 0 8M13.500 1.500q4 5.500 0 11" /></svg></TrayBtn>
          <Clock><span>13:18</span><span>2025/12/16</span></Clock>
        </Tray>
      </TaskBar>
    </Page>
  );
}
